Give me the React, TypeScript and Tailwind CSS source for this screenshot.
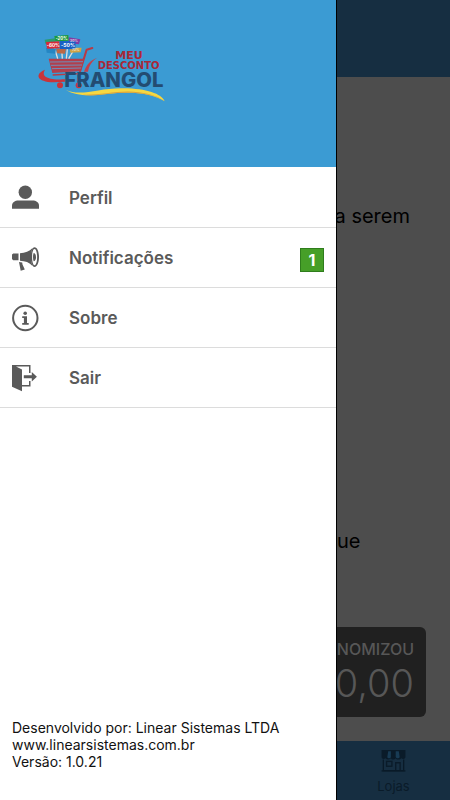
import type { ReactNode } from "react";

const Logo = () => {
  return (
    <svg viewBox="0 0 435 255" className="w-[145px] h-[85px]" role="img" aria-label="Meu Desconto Frangol">
      {/* cart */}
      <path
        d="M187 69 L170 74 L150 139"
        fill="none"
        stroke="#b93a45"
        strokeWidth="6"
        strokeLinecap="round"
        strokeLinejoin="round"
      />
      <path d="M56 101 L163 101 L153 138 L67 144 Z" fill="#b13f4d" />
      <path d="M60 111 L159 110 M63 121 L156 120 M66 131 L153 129" stroke="#6f8fb8" strokeWidth="3" />
      <path d="M68 150 L148 146 L143 168" fill="none" stroke="#b93a45" strokeWidth="4" strokeLinejoin="round" />
      <circle cx="90" cy="181" r="9" fill="#c8343b" />
      <circle cx="146" cy="181" r="9" fill="#c8343b" />
      <path d="M45 134 C14 146 18 171 72 172 L105 170 L105 163 C62 165 30 158 45 134 Z" fill="#c8343b" />
      <path d="M202 98 C182 105 169 119 162 140 L174 140 C177 119 189 106 202 98 Z" fill="#c0414c" />
      {/* discount signs */}
      <path d="M74 70 L83 101 M94 58 L97 101 M112 72 L109 101 M133 72 L116 101" stroke="#e6dedb" strokeWidth="4" />
      <path d="M44 44 L75 40 L77 54 L46 56 Z" fill="#2b9c70" />
      <path d="M116 37 L151 43 L147 58 L116 55 Z" fill="#813ca3" />
      <path d="M48 69 L78 71 L76 86 L50 83 Z" fill="#2586c3" />
      <path d="M79 71 L108 71 L105 86 L81 85 Z" fill="#bd6844" />
      <path d="M119 68 L155 68 L152 82 L121 83 Z" fill="#d2a444" />
      <path d="M73 33 L115 30 L116 47 L76 49 Z" fill="#1d9a3c" />
      <path d="M48 51 L88 49 L89 70 L51 71 Z" fill="#d82938" />
      <path d="M89 48 L137 49 L136 73 L90 72 Z" fill="#1860c4" />
      <g fill="#fff" fontFamily="Inter, sans-serif" fontWeight="700" textAnchor="middle">
        <text x="95" y="44" fontSize="13">-20%</text>
        <text x="70" y="66" fontSize="14">-60%</text>
        <text x="114" y="66" fontSize="15">-50%</text>
        <text x="132" y="52" fontSize="10" opacity="0.7">30%</text>
        <text x="137" y="79" fontSize="10" opacity="0.7">70%</text>
      </g>
      {/* swoosh */}
      <path
        d="M108 195 C155 216 207 188 281 190 C349 191 395 206 404 229 C363 201 295 199 231 207 C174 214 137 212 108 195 Z"
        fill="#f5d842"
      />
      <path d="M156 209 C210 212 271 193 326 202 C363 207 390 217 404 229 C363 201 295 200 231 207 C200 211 179 213 156 209 Z" fill="#dba23d" />
      <g fontFamily="'DejaVu Sans', sans-serif" fontWeight="700" fill="#a82838">
        <text x="256" y="103" fontSize="33">MEU</text>
        <text x="203" y="133" fontSize="30">DESCONTO</text>
      </g>
      <text x="103" y="186" fontSize="61" fontWeight="800" fontFamily="Inter, sans-serif" fill="#234c72">
        FRANGOL
      </text>
    </svg>
  );
};

const PersonIcon = () => (
  <svg viewBox="0 0 28 28" className="size-7" fill="currentColor">
    <circle cx="13.3" cy="8.2" r="6.7" />
    <path d="M0 24.7 V21.5 C0 18.5 3 16.5 6.5 16.5 H20.5 C24 16.5 27 18.5 27 21.5 V24.7 Z" />
  </svg>
);

const MegaphoneIcon = () => (
  <svg viewBox="0 0 28 28" className="size-7" fill="currentColor">
    <path d="M0 10.5 L1.2 9.5 H6.5 V16.3 H1.2 L0 15 Z" />
    <path d="M8 9.2 C13 9 17.5 7.5 20.5 4 C18.7 9 18.7 17 20.5 22 C17.5 18.5 13 17 8 16.8 Z" />
    <path
      fillRule="evenodd"
      d="M22.5 3.2 C28.5 3.2 28.5 23 22.5 23 C17.6 23 17.6 3.2 22.5 3.2 Z M22.5 5 C19.3 5 19.3 21.2 22.5 21.2 C26 21.2 26 5 22.5 5 Z"
    />
    <path d="M21.6 9 C24.8 9 24.8 17.3 21.6 17.3 C20.8 14.5 20.8 11.5 21.6 9 Z" />
    <path d="M7 18 L10.2 18.5 L10.5 20.5 L12.8 25.5 L8.7 26.7 Z" />
  </svg>
);

const InfoIcon = () => (
  <svg viewBox="0 0 28 28" className="size-7" fill="currentColor">
    <circle cx="13.3" cy="14" r="12.2" fill="none" stroke="currentColor" strokeWidth="2" />
    <circle cx="13.2" cy="9.2" r="1.8" />
    <path d="M10.2 12.3 H15 V19 H16.7 V20.7 H10.2 V19 H11.9 V14 H10.2 Z" />
  </svg>
);

const ExitIcon = () => (
  <svg viewBox="0 0 28 28" className="size-7" fill="currentColor">
    <path d="M0 1 H18.5 V9 H17 V2.5 H4 L10 5.5 V21 H17 V17 H18.5 V22.5 H10 V27.3 L0 22.7 Z" />
    <path d="M11.8 11.2 H19.8 V8 L24.9 12.7 L19.8 17.4 V14.2 H11.8 Z" />
  </svg>
);

const StoreIcon = () => (
  <svg viewBox="0 0 27 26" className="w-[27px] h-[26px]" fill="currentColor">
    <path d="M0 1 H27 V9 C27 11 24 12 22.5 10.5 C20.5 12.5 17 12.5 16 10.5 C14.5 12.5 11.5 12.5 10.5 10.5 C8.5 12.5 6 12.5 4.5 10.5 C2.5 12 0 11 0 9 Z" />
    <path d="M7.5 2.5 H10.5 V9 C10.5 11 6.5 11 6.5 9 Z M16 2.5 H19.5 L20.5 9 C20 11 16.5 11 16 9 Z" fill="#183b54" />
    <path d="M2 12 V24.5 H25 V12 M16 24 V15.5 H21 V24" fill="none" stroke="currentColor" strokeWidth="1.5" />
    <rect x="5.7" y="14" width="6" height="5.5" fill="none" stroke="currentColor" strokeWidth="1.5" />
    <path d="M0 24 H27 V25.5 H0 Z" />
  </svg>
);

type MenuItemProps = {
  icon: ReactNode;
  label: string;
  count?: number;
};

const MenuItem = ({ icon, label, count }: MenuItemProps) => {
  return (
    <li className="border-b border-[#dcdcdc]">
      <button type="button" className="w-full h-[59px] px-3 flex items-center text-[#5a5a5a]">
        <span className="w-[57px] shrink-0">{icon}</span>
        <span className="text-[17px] leading-6 font-semibold">{label}</span>
        {count !== undefined && (
          <span className="ml-auto mt-1 w-6 h-6 flex items-center justify-center border border-[#2f7d1c] bg-[#469f28] text-white text-base font-bold">
            {count}
          </span>
        )}
      </button>
    </li>
  );
};

const Drawer = () => {
  return (
    <aside className="w-[337px] shrink-0 flex flex-col bg-white border-r border-black">
      <header className="h-[167px] pl-[30px] pt-[25px] bg-[#3b9bd3]">
        <Logo />
      </header>
      <nav className="pt-px">
        <ul>
          <MenuItem icon={<PersonIcon />} label="Perfil" />
          <MenuItem icon={<MegaphoneIcon />} label="Notificações" count={1} />
          <MenuItem icon={<InfoIcon />} label="Sobre" />
          <MenuItem icon={<ExitIcon />} label="Sair" />
        </ul>
      </nav>
      <footer className="mt-auto px-3 pb-[30px] text-sm leading-[17px] text-[#111111]">
        <p>Desenvolvido por: Linear Sistemas LTDA</p>
        <p>www.linearsistemas.com.br</p>
        <p>Versão: 1.0.21</p>
      </footer>
    </aside>
  );
};

const Home = () => {
  return (
    <main className="flex-1 min-w-0 overflow-hidden flex flex-col bg-[#4d4d4d]">
      <div className="h-[77px] bg-[#162e41]" />
      <div className="flex-1 flex flex-col pb-6">
        <p className="mt-[123px] pr-10 flex justify-end whitespace-nowrap text-xl leading-8 text-black">a serem</p>
        <p className="mt-auto text-xl leading-8 text-black">ue</p>
        <div className="mt-[70px] mr-6 h-[90px] px-3 pt-2 rounded-r-md bg-[#202020] text-[#575757] flex flex-col items-end whitespace-nowrap">
          <span className="text-base leading-7 font-medium">NOMIZOU</span>
          <span className="text-[38px] leading-10 font-light">0,00</span>
        </div>
      </div>
      <a
        href="#lojas"
        className="h-[59px] pt-2 flex flex-col items-center bg-[#162e41] text-[#0a1b29] text-[13px] leading-7"
      >
        <StoreIcon />
        Lojas
      </a>
    </main>
  );
};

const App = () => {
  return (
    <div className="min-h-screen flex font-[Inter,'Liberation_Sans',sans-serif]">
      <Drawer />
      <Home />
    </div>
  );
};

export default App;
